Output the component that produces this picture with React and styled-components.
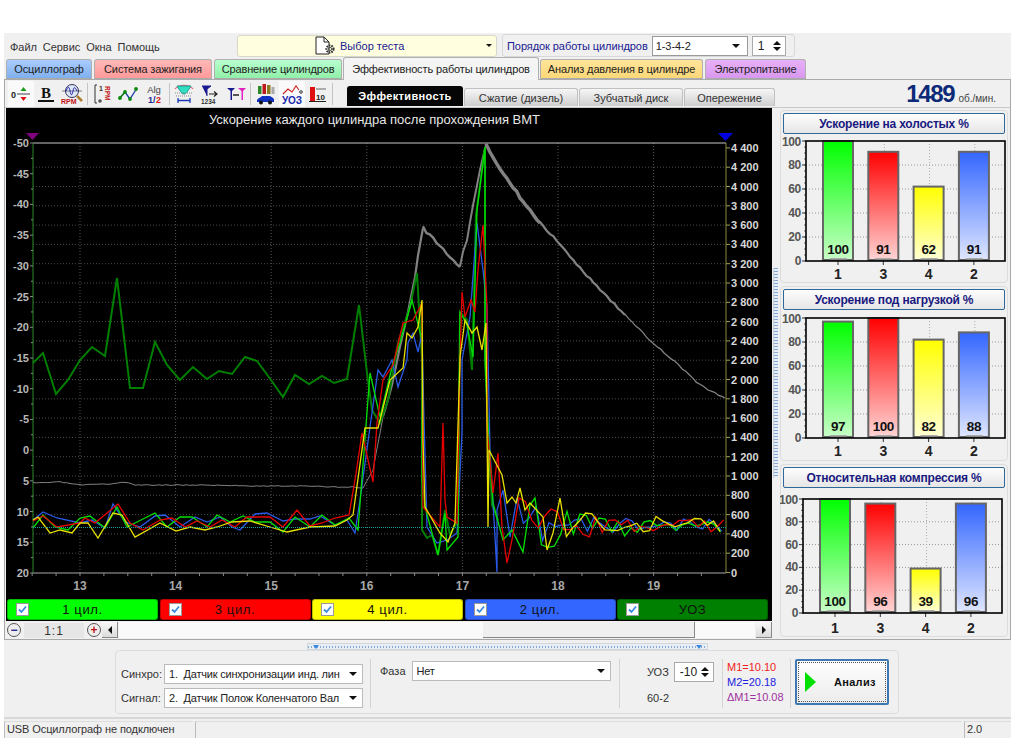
import React from "react";
import styled, { createGlobalStyle } from "styled-components";

const UI = `"Liberation Sans", Arial, sans-serif`;

const Global = createGlobalStyle`
  html, body { margin: 0; padding: 0; background: #fff; }
  body { font-family: ${UI}; font-size: 11px; color: #222; }
`;

const Win = styled.div`
  width: 1007px; height: 705px; margin: 33px 0 0 4px; background: #f0f0f0;
  display: flex; flex-direction: column; overflow: hidden;
`;
const TopRow = styled.div`
  height: 25px; display: flex; align-items: center; padding: 0 0 0 6px; box-sizing: border-box;
`;
const Menu = styled.div`display: flex; gap: 6px; width: 227px; padding-top: 3px; color: #333; letter-spacing: -.05px;`;
const TestSelect = styled.div`
  width: 260px; height: 22px; box-sizing: border-box; background: #ffffe0; border: 1px solid #d8d8c8; border-radius: 3px;
  display: flex; align-items: center; color: #1a1a90; padding: 0 4px 0 77px; gap: 3px;
`;
const Caret = styled.span`
  width: 0; height: 0; border-left: ${p => p.$s || 3}px solid transparent; border-right: ${p => p.$s || 3}px solid transparent;
  border-top: ${p => p.$s || 3}px solid #111; margin-left: auto; flex: none;
`;
const OrderGroup = styled.div`
  margin-left: 5px; width: 293px; height: 23px; box-sizing: border-box; border: 1px solid #d8d8d8; border-radius: 3px;
  display: flex; align-items: center; padding: 0 0 0 4px; color: #1a1a90; gap: 4px; letter-spacing: -.07px;
`;
const SmallSelect = styled.div`
  width: 96px; height: 20px; box-sizing: border-box; background: #fff; border: 1px solid #999; display: flex; align-items: center;
  padding: 0 7px 0 3px; color: #222;
`;
const Spin = styled.div`
  width: ${p => p.$w}px; height: 20px; box-sizing: border-box; background: #fff; border: 1px solid #aaa; display: flex; align-items: center;
  justify-content: space-between; padding: 0 4px 0 5px; color: #222; font-size: 12px; flex: none;
`;
const Arrows = styled.span`
  display: flex; flex-direction: column; gap: 2px;
  &::before, &::after { content: ""; width: 0; height: 0; border-left: 4px solid transparent; border-right: 4px solid transparent; }
  &::before { border-bottom: 4px solid #111; }
  &::after { border-top: 4px solid #111; }
`;

const TabRow = styled.div`height: 21px; display: flex; align-items: flex-end; padding-left: 2px; gap: 2px; position: relative;`;
const Tab = styled.div`
  width: ${p => p.$w}px; height: ${p => p.$active ? 23 : 20}px; box-sizing: border-box; flex: none;
  display: flex; align-items: center; justify-content: center; color: #222; letter-spacing: -.13px;
  background: ${p => p.$active ? "#f4f4f4" : `linear-gradient(${p.$c1}, ${p.$c2})`};
  border: 1px solid #b0b0b0; border-bottom: ${p => p.$active ? "none" : "1px solid #aaa"};
  border-radius: 3px 3px 0 0; position: relative; z-index: ${p => p.$active ? 2 : 1};
  margin-bottom: ${p => p.$active ? -1 : 0}px; margin-left: ${p => p.$ml || 0}px;
`;
const Pane = styled.div`
  height: 561px; box-sizing: border-box; border: 1px solid #a8a8a8; border-top: 1px solid #aaa; display: flex; flex-direction: column;
  padding: 0 0 0 1px;
`;
const ToolRow = styled.div`
  height: 27px; display: flex; align-items: flex-end; flex: none; border-bottom: 1px solid #c8c8c8; margin-left: -1px;
`;
const Tools = styled.div`display: flex; align-items: center; height: 26px; width: 342px; flex: none; padding-left: 3px; box-sizing: border-box;`;
const Tool = styled.div`
  width: 25.6px; height: 26px; flex: none; display: flex; align-items: center; justify-content: center;
  background: ${p => p.$on ? "#fafafa" : "transparent"};
`;
const Sep = styled.div`width: 1px; height: 22px; background: #c4c4c4; margin: 0 2px; flex: none;`;
const SubTabs = styled.div`display: flex; align-items: flex-end; gap: 1px; margin-bottom: 1px;`;
const SubTab = styled.div`
  width: ${p => p.$w}px; height: ${p => p.$active ? 20 : 18}px; box-sizing: border-box; display: flex; align-items: center; justify-content: center;
  border-radius: 3px 3px 0 0; font-size: 11px;
  ${p => p.$active
    ? "background:#050505;color:#fff;font-weight:bold;letter-spacing:.35px;"
    : "background:linear-gradient(#f6f6f6,#cfcfcf);color:#333;border:1px solid #c0c0c0;border-bottom:none;"}
`;
const Rpm = styled.div`
  margin-left: auto; padding-right: 14px; display: flex; align-items: baseline; gap: 4px; color: #444; font-size: 10px; align-self: center;
  b { font-size: 24px; color: #0c2a78; letter-spacing: -1.3px; }
`;
const Main = styled.div`display: flex; flex: 1; min-height: 0;`;
const LeftCol = styled.div`width: 766px; flex: none; display: flex; flex-direction: column;`;
const ChartBox = styled.div`background: #000; height: 513px; flex: none; display: flex; flex-direction: column;`;
const ChartSvg = styled.svg`display: block; flex: none;`;
const Legend = styled.div`display: flex; gap: 1.5px; padding: 0 4px 0 1px; height: 22px;`;
const LegendBtn = styled.div`
  flex: 1; height: 21px; box-sizing: border-box; background: ${p => p.$c}; border-radius: 3px; border: 1px solid rgba(0,0,0,.25);
  display: flex; align-items: center; position: relative; justify-content: center; color: #111; font-size: 13px; letter-spacing: .6px;
`;
const Check = styled.span`
  position: absolute; left: 8px; top: 3px; width: 13px; height: 13px; background: #fff; border: 1px solid #999; box-sizing: border-box;
  display: flex; align-items: center; justify-content: center;
`;
const ScrollRow = styled.div`display: flex; align-items: center; height: 16px; margin-top: 1px; gap: 1px;`;
const Round = styled.div`
  width: 14px; height: 14px; border-radius: 50%; box-sizing: border-box; border: 1px solid #555; background: #eee; display: flex; align-items: center; justify-content: center; flex: none;
  margin-left: ${p => p.$ml || 0}px; color: ${p => p.$c}; font-weight: bold; font-size: 12px; line-height: 1;
`;
const Ratio = styled.div`
  width: 60px; height: 15px; background: #e6e6e6; margin: 0 2px; text-align: center; line-height: 16px; font-size: 12px; letter-spacing: 1px; color: #333; flex: none;
`;
const ScrollBtn = styled.div`
  width: 16px; height: 16px; background: linear-gradient(#f8f8f8,#dcdcdc); border-right: 1px solid #888; border-bottom: 1px solid #888; box-sizing: border-box; display: flex; align-items: center; justify-content: center; flex: none;
`;
const Tri = styled.span`
  width: 0; height: 0; border-top: 4px solid transparent; border-bottom: 4px solid transparent;
  ${p => p.$dir === "l" ? "border-right: 4px solid #111;" : "border-left: 4px solid #111;"}
`;
const Track = styled.div`flex: 1; height: 16px; display: flex; background: #fafafa;`;
const Space = styled.div`width: ${p => p.$w}px; flex: none;`;
const Thumb = styled.div`width: 212px; height: 16px; background: #efefef; box-sizing: border-box; border-right: 1px solid #888; border-bottom: 1px solid #888; flex: none;`;

const VSplit = styled.div`
  width: 4px; height: 210px; align-self: flex-start; margin: 160px 2px 0 1px; flex: none; background-color: #e8eef4; border-left: 1px solid #c8d0d8;
  background-image: repeating-linear-gradient(#7fa8d8 0 1px, transparent 1px 3px);
`;
const RightCol = styled.div`width: 228px; flex: none; display: flex; flex-direction: column; gap: 3px; padding-top: 2px;`;
const Card = styled.div`
  height: ${p => p.$h}px; box-sizing: border-box; border: 1px solid #dcdcdc; border-radius: 4px; padding: 2px 2px 0; flex: none;
`;
const CardTitle = styled.div`
  height: 21px; box-sizing: border-box; border: 1px solid #2f6799; border-radius: 2px; background: linear-gradient(#fdfdfd,#e6e6e6);
  display: flex; align-items: center; justify-content: center; color: #1a1a80; font-weight: bold; font-size: 12px; letter-spacing: -.2px;
`;
const CardSvg = styled.svg`display: block; margin-left: -3px;`;

const HSplit = styled.div`
  width: 401px; height: 7px; margin: 3px 0 0 303px; flex: none; background-color: #e8eef4; border: 1px solid #cfd6dc; box-sizing: border-box; position: relative;
  background-image: repeating-linear-gradient(90deg, #7fa8d8 0 1px, transparent 1px 3px); background-size: 100% 2px; background-repeat: no-repeat; background-position: 0 2px;
  &::before, &::after {
    content: ""; position: absolute; top: 1px; width: 0; height: 0;
    border-left: 3px solid transparent; border-right: 3px solid transparent; border-top: 4px solid #3a8ae0;
  }
  &::before { left: 5px; }
  &::after { right: 5px; }
`;
const Bottom = styled.div`
  width: 784px; height: 64px; margin-left: 111px; flex: none; box-sizing: border-box; border: 1px solid #dcdcdc; border-radius: 4px;
  display: flex; align-items: stretch; padding: 8px 0 0 5px;
`;
const FieldGrid = styled.div`display: grid; grid-template-columns: 42px 199px; column-gap: 1px; row-gap: 4px; align-items: center; align-content: start; padding-top: 5px;`;
const Label = styled.span`color: #333; font-size: 11px;`;
const PhaseLabel = styled(Label)`padding-top: 4px;`;
const Combo = styled.div`
  width: ${p => p.$w}px; height: 20px; box-sizing: border-box; background: #fff; border: 1px solid #bbb; display: flex; align-items: center;
  padding: 0 5px 0 4px; color: #222; font-size: 11px; white-space: nowrap; flex: none; gap: 3px;
`;
const ComboText = styled.span`flex: 1; overflow: hidden; min-width: 0; letter-spacing: -.2px;`;
const Divider = styled.div`width: 1px; height: 49px; background: #d4d4d4; flex: none; margin: ${p => p.$m};`;
const PhaseBox = styled.div`display: flex; align-items: flex-start; gap: 6px; padding-top: 2px; width: 233px; flex: none;`;
const UozBox = styled.div`width: 68px; flex: none; padding: 3px 0 0 27px; display: flex; flex-direction: column; gap: 10px; color: #333;`;
const UozRow = styled.div`display: flex; align-items: center; gap: 5px; white-space: nowrap;`;
const Meas = styled.div`width: 63px; flex: none; display: flex; flex-direction: column; gap: 2px; font-size: 11px; margin-top: 2px;`;
const MeasLine = styled.span`color: ${p => p.$c}; line-height: 13px; white-space: nowrap;`;
const RunBtn = styled.div`
  width: 94px; height: 46px; box-sizing: border-box; border: 2px solid #3f78b0; border-radius: 2px; outline: 1px dotted #555; outline-offset: -4px;
  background: linear-gradient(#fff,#ececec); display: flex; align-items: center; padding-left: 8px; gap: 18px; font-weight: bold; color: #111; font-size: 11px; letter-spacing: .3px;
  flex: none;
`;
const Status = styled.div`
  margin-top: 3px; border-top: 2px solid #d8d8d8; height: 21px; box-sizing: border-box; display: flex; gap: 2px; padding-top: 2px; flex: none;
`;
const StatusCell = styled.div`
  width: ${p => p.$w ? p.$w + "px" : "auto"}; flex: ${p => p.$w ? "none" : 1}; border-left: 1px solid #bbb; border-top: 1px solid #ddd;
  padding: 1px 0 0 2px; font-size: 11px; color: #333; white-space: nowrap; letter-spacing: -.1px;
`;

/* ---------- chart data ---------- */
const prng = (seed) => { let s = seed; return () => { s = (s * 16807) % 2147483647; return s / 2147483647; }; };
const tail = (seed, start) => {
  const r = prng(seed); const pts = [];
  for (let x = start; x <= 726; x += 6.4) {
    const amp = 6 + 22 * Math.exp(-(x - start) / 55);
    pts.push([x, 526 + (r() - .5) * 2 * amp]);
  }
  return pts;
};
const jag = (seed, pts, amp = 1.4) => {
  const r = prng(seed); const out = [];
  for (let i = 0; i < pts.length - 1; i++) {
    const [x0, y0] = pts[i]; const [x1, y1] = pts[i + 1];
    const n = Math.max(1, Math.round((x1 - x0) / 3.5));
    for (let k = 0; k < n; k++) {
      const t = k / n;
      out.push([x0 + (x1 - x0) * t, y0 + (y1 - y0) * t + (r() - .5) * 2 * amp]);
    }
  }
  out.push(pts[pts.length - 1]);
  return out;
};
const toD = (pts) => pts.map(([x, y]) => `${x.toFixed(1)},${y.toFixed(1)}`).join(" ");

const uoz = [[33,363],[43,353],[56,394],[68,380],[80,360],[92,347],[105,356],[117,278],[130,388],[143,388],[155,342],[167,365],[180,380],[193,367],[207,379],[219,371],[232,374],[245,357],[257,361],[271,380],[283,397],[295,375],[309,384],[322,376],[334,383],[347,379],[359,305],[367,373],[372,410],[380,423],[388,400],[398,343],[410,307],[417,273],[422,360],[422,530],[427,538],[432,535],[438,555],[445,510],[450,535],[458,520],[460,312],[467,320],[472,370],[476,215],[485,147],[485,357],[488,430],[492,505],[498,520]];
const grayFlat = [[33,483],[60,482],[80,485],[110,484],[125,482],[135,485],[200,485],[260,486],[300,486],[335,487],[352,487],[363,488],[373,470],[383,417]];
const grayRise = [[383,417],[392,385],[400,347],[408,312],[415,277],[418,255],[423,228]];
const grayDip = [[423,228],[460,267]];
const grayClimb = [[460,267],[463,252],[467,240],[473,205],[480,170],[486,145]];
const grayFall1 = [[486,145],[500,168],[520,197],[540,223]];
const grayFall2 = [[540,223],[560,244],[580,268],[600,290],[625,315]];
const grayFall3 = [[625,315],[650,340],[675,362],[700,385],[712,392],[725,398]];
const blue = [[33,520],[43,512],[57,518],[80,523],[92,520],[105,528],[113,504],[125,522],[140,527],[155,516],[165,515],[180,527],[195,517],[207,522],[220,517],[232,527],[240,530],[255,514],[267,513],[283,521],[295,519],[310,519],[320,516],[335,525],[347,520],[355,533],[360,500],[370,427],[378,370],[383,377],[392,360],[398,387],[407,360],[408,343],[413,333],[418,352],[422,333],[424,420],[427,527],[437,543],[447,540],[457,533],[462,433],[462,360],[470,317],[477,223],[483,270],[487,307],[490,450],[497,572],[497,510],[503,490],[510,537],...tail(11, 517)];
const red = [[33,521],[43,516],[57,527],[80,523],[85,518],[95,523],[118,504],[130,523],[143,530],[160,520],[172,518],[185,527],[197,521],[210,527],[222,520],[235,527],[247,517],[270,517],[283,527],[297,510],[310,526],[322,523],[335,518],[349,515],[355,480],[362,433],[373,482],[377,423],[383,380],[393,365],[403,323],[413,320],[420,307],[422,303],[423,507],[440,527],[443,423],[445,500],[447,517],[457,523],[460,360],[462,292],[465,317],[471,300],[475,312],[478,270],[483,225],[487,307],[487,427],[493,493],[498,453],[502,527],[507,563],[512,540],...tail(23, 519)];
const lime = [[33,528],[43,515],[55,527],[68,530],[80,518],[90,516],[105,528],[117,507],[127,527],[155,513],[167,527],[180,517],[192,517],[207,527],[217,515],[230,522],[243,516],[255,522],[270,522],[283,532],[295,517],[310,527],[322,515],[335,525],[349,518],[358,530],[370,373],[380,417],[393,363],[400,343],[412,300],[422,340],[422,480],[425,507],[438,555],[445,513],[447,550],[458,537],[460,312],[467,325],[473,357],[477,210],[485,147],[485,357],[488,427],[493,503],[503,540],[512,530],[523,552],[530,505],...tail(37, 535)];
const yellow = [[33,520],[38,517],[50,533],[60,530],[72,533],[80,523],[88,523],[98,538],[113,513],[122,515],[135,537],[160,523],[176,531],[190,527],[205,530],[217,527],[232,522],[250,521],[270,527],[287,532],[310,527],[335,526],[347,520],[353,515],[365,428],[378,428],[390,380],[403,368],[407,333],[412,338],[418,327],[422,300],[423,440],[425,507],[440,533],[448,542],[455,523],[460,360],[460,357],[465,320],[472,333],[477,327],[482,350],[486,323],[488,527],[489,450],[502,475],[507,503],[512,497],[516,503],[520,488],[525,510],[530,503],[543,517],[547,550],[553,533],...tail(51, 560)];

const yTop = 143, yBot = 573, xL = 33, xR = 726;
const leftVals = [-50,-45,-40,-35,-30,-25,-20,-15,-10,-5,0,5,10,15,20];
const leftY = (v) => yBot - (20 - v) * (430 / 70);
const rightVals = Array.from({ length: 23 }, (_, i) => i * 200);
const rightY = (v) => 572.5 - v / 200 * 19.3;
const xVals = [13,14,15,16,17,18,19];
const xAt = (v) => 80 + (v - 13) * 95.6;
const fmt = (n) => n >= 1000 ? `${Math.floor(n / 1000)} ${String(n % 1000).padStart(3, "0")}` : String(n);

const GrayLine = ({ seed, pts, w, amp }) => (
  <polyline points={toD(jag(seed, pts, amp))} fill="none" stroke="#828282" strokeWidth={w} />
);

const MainChart = () => (
  <ChartSvg width="766" height="491" viewBox="6 108 766 491">
    <text x="374.500" y="124" fill="#e8e8e8" fontSize="13" textAnchor="middle" fontFamily={UI}>Ускорение каждого цилиндра после прохождения ВМТ</text>
    <path d="M26 133h13l-6.500 7z" fill="#800080" />
    <path d="M718 133h15l-7.500 8z" fill="#0000e0" />
    {rightVals.slice(1, 22).map(v => (
      <line key={v} x1={xL} x2={xR} y1={rightY(v)} y2={rightY(v)} stroke="#4a4a4a" strokeDasharray="1 2" />
    ))}
    {xVals.map(v => <line key={v} x1={xAt(v)} x2={xAt(v)} y1={yTop} y2={yBot} stroke="#555" strokeDasharray="1 2" />)}
    <line x1={xL} x2={xR} y1={yTop} y2={yTop} stroke="#c8c8c8" />
    <line x1={xL} x2={xR} y1={yBot} y2={yBot} stroke="#aaa" />
    <line x1={xL} x2={xL} y1={yTop} y2={yBot} stroke="#2a8a2a" />
    <line x1={xR} x2={xR} y1={yTop} y2={yBot} stroke="#8a8a3a" />
    {Array.from({ length: 29 }, (_, i) => i).map(i => (
      <line key={i} x1={xL - (i % 2 === 0 ? 3 : 2)} x2={xL} y1={leftY(-50 + i * 2.5)} y2={leftY(-50 + i * 2.5)} stroke="#888" />
    ))}
    {leftVals.map(v => <text key={v} x={29} y={leftY(v) + 4} fill="#b8b8b8" fontSize="11" textAnchor="end" fontFamily={UI} fontWeight="bold">{v}</text>)}
    {rightVals.map(v => (
      <g key={v}>
        <line x1={xR} x2={xR + 4} y1={rightY(v)} y2={rightY(v)} stroke="#a0a050" />
        <text x={731} y={rightY(v) + 4} fill="#d8d8d8" fontSize="11" fontFamily={UI} fontWeight="bold">{fmt(v)}</text>
      </g>
    ))}
    {Array.from({ length: 29 }, (_, i) => i).map(i => {
      const x = xAt(12.5) + i * 23.9;
      return x <= xR ? <line key={i} x1={x} x2={x} y1={yBot} y2={yBot + 3} stroke="#888" /> : null;
    })}
    {xVals.map(v => <text key={v} x={xAt(v)} y={590} fill="#a8a8a8" fontSize="12" textAnchor="middle" fontFamily={UI} fontWeight="bold">{v}</text>)}
    <GrayLine seed={3} pts={grayFlat} w={1} amp={0.4} />
    <GrayLine seed={5} pts={grayRise} w={2.2} amp={0.6} />
    <GrayLine seed={7} pts={grayDip} w={2.4} amp={1.8} />
    <GrayLine seed={9} pts={grayClimb} w={2} amp={0.5} />
    <GrayLine seed={13} pts={grayFall1} w={3.4} amp={1.2} />
    <GrayLine seed={17} pts={grayFall2} w={2.2} amp={1} />
    <GrayLine seed={19} pts={grayFall3} w={1.3} amp={0.8} />
    <polyline points={toD(uoz)} fill="none" stroke="#007f00" strokeWidth="2" />
    <polyline points={toD(blue)} fill="none" stroke="#2a5ae8" strokeWidth="1.300" />
    <polyline points={toD(lime)} fill="none" stroke="#00e000" strokeWidth="1.300" />
    <polyline points={toD(red)} fill="none" stroke="#e80000" strokeWidth="1.300" />
    <polyline points={toD(yellow)} fill="none" stroke="#e8e000" strokeWidth="1.300" />
    <line x1={xL} x2={xR} y1="527.500" y2="527.500" stroke="#1c9c9c" strokeDasharray="1 1" />
  </ChartSvg>
);

const BAR_COLORS = {
  "1": ["#00ff00", "#c8ffc8"],
  "3": ["#ff0000", "#ffd4d4"],
  "4": ["#ffff00", "#ffffd4"],
  "2": ["#3366ff", "#dfe6ff"],
};
const BarChart = ({ id, values, top, plotH, h, left, right, labelDy = 18 }) => {
  const base = top + plotH;
  const ticks = [0, 20, 40, 60, 80, 100];
  const bars = ["1", "3", "4", "2"];
  const sx = (i) => left + 17 + i * 45.3;
  return (
    <CardSvg width="226" height={h} viewBox={`0 0 226 ${h}`}>
      <defs>
        {bars.map(b => (
          <linearGradient key={b} id={`${id}-${b}`} x1="0" y1="0" x2="0" y2="1">
            <stop offset="0" stopColor={BAR_COLORS[b][0]} />
            <stop offset="1" stopColor={BAR_COLORS[b][1]} />
          </linearGradient>
        ))}
      </defs>
      {ticks.slice(1, 5).map(t => {
        const y = base - t * plotH / 100;
        return <line key={t} x1={left} x2={right} y1={y} y2={y} stroke="#999" strokeDasharray="1 2" />;
      })}
      {[0, 1, 2, 3].map(i => <line key={i} x1={left + 33 + i * 45.3} x2={left + 33 + i * 45.3} y1={top} y2={base} stroke="#aaa" strokeDasharray="1 2" />)}
      {ticks.map(t => {
        const y = base - t * plotH / 100;
        return (
          <g key={t}>
            <line x1={left - 4} x2={left} y1={y} y2={y} stroke="#333" />
            <text x={left - 5} y={y + (t === 100 ? 5 : 4)} fontSize="12" fontWeight="bold" fill="#555" textAnchor="end" fontFamily={UI} letterSpacing="-.3">{t}</text>
          </g>
        );
      })}
      {Array.from({ length: 21 }, (_, i) => i).map(i => (
        <line key={i} x1={left - 2} x2={left} y1={base - i * plotH / 20} y2={base - i * plotH / 20} stroke="#666" />
      ))}
      {bars.map((b, i) => {
        const v = values[i];
        const y = base - v * plotH / 100;
        return (
          <g key={b}>
            <rect x={sx(i)} y={y} width="30" height={base - y - 1} fill={`url(#${id}-${b})`} stroke="#666" strokeWidth="2" />
            <rect x={sx(i) + 7} y={base - 3} width="17" height="1.500" fill="#aaa" />
            <text x={sx(i) + 15} y={base - 7} fontSize="13.500" fontWeight="bold" fill="#111" textAnchor="middle" fontFamily={UI} letterSpacing="-.4">{v}</text>
            <line x1={sx(i) + 15} x2={sx(i) + 15} y1={base} y2={base + 4} stroke="#333" />
            <text x={sx(i) + 15} y={base + labelDy} fontSize="14" fontWeight="bold" fill="#222" textAnchor="middle" fontFamily={UI}>{b}</text>
          </g>
        );
      })}
      <rect x={left} y={top} width={right - left} height={plotH} fill="none" stroke="#000" strokeWidth="1.600" />
    </CardSvg>
  );
};

/* ---------- toolbar icons ---------- */
const ic = { width: 22, height: 22, viewBox: "0 0 22 22" };
const IFont = { fontFamily: UI, fontWeight: "bold" };
const IconZero = () => (
  <svg {...ic}><text x="1" y="15" fontSize="9" fill="#222" {...IFont}>0</text>
    <path d="M7 11h13" stroke="#444" /><path d="M13.500 4l3 4h-6z" fill="#1a9a1a" /><path d="M13.500 18l3-4h-6z" fill="#e01010" /></svg>
);
const IconBold = () => (
  <svg {...ic}><text x="11" y="15" fontSize="15" fill="#111" textAnchor="middle" fontFamily="'Liberation Serif', serif" fontWeight="bold">B</text><path d="M3 18h16" stroke="#111" strokeWidth="2" /></svg>
);
const IconRpm = () => (
  <svg {...ic} width="24" viewBox="0 0 24 22"><circle cx="12" cy="8" r="6.500" fill="#dfe8f8" stroke="#335" />
    <path d="M6 8c2-5 3-5 4 0s2 5 3 0 2-4 4 0" fill="none" stroke="#22a" /><path d="M2 8h20" stroke="#335" strokeWidth=".6" />
    <path d="M17 13l5 5" stroke="#b08030" strokeWidth="2.500" /><text x="1" y="21" fontSize="7" fill="#c01010" {...IFont}>RPM</text></svg>
);
const IconRuler = () => (
  <svg {...ic}><path d="M5 2H3v18h2" fill="none" stroke="#333" /><circle cx="8" cy="18" r="1.800" fill="#555" />
    <text x="7" y="8" fontSize="7" fill="#333" {...IFont}>1</text>
    <text x="0" y="0" fontSize="6.500" fill="#c01010" transform="translate(13,3) rotate(90)" {...IFont}>RPM</text></svg>
);
const IconZig = () => (
  <svg {...ic}><path d="M2 16l6-7 5 7 7-11" fill="none" stroke="#1a3ab0" strokeWidth="1.300" />
    <path d="M2 16l6-7" stroke="#1a8a1a" strokeWidth="1.500" /><g fill="#0a8a0a"><circle cx="3" cy="15" r="1.900" /><circle cx="8" cy="9" r="1.900" /><circle cx="13" cy="16" r="1.900" /><circle cx="19" cy="6" r="1.900" /></g></svg>
);
const IconAlg = () => (
  <svg {...ic}><text x="11" y="10" fontSize="9.500" fill="#444" textAnchor="middle" fontFamily={UI}>Alg</text>
    <text x="5" y="20" fontSize="9" fill="#1a2a90" {...IFont}>1/</text><text x="13" y="20" fontSize="9" fill="#d01818" {...IFont}>2</text></svg>
);
const IconBridge = () => (
  <svg {...ic}><path d="M2 6c4-5 14-5 18 0" fill="none" stroke="#e06060" strokeWidth="1.200" /><path d="M4 3c3 4 4 8 7 8s4-4 7-8z" fill="#30e0c0" stroke="#1a9a9a" />
    <path d="M2 10h18M3 13h16" stroke="#888" strokeDasharray="1 1" /><path d="M5 15v5M17 15v5M5 17.500h12" stroke="#1a3ab0" strokeWidth="1.300" /></svg>
);
const IconTArrow = () => (
  <svg {...ic}><path d="M3 3h9l-4 3v7" fill="#1a1a90" stroke="#1a1a90" /><path d="M10 11h8m-3-2.500l3 2.500-3 2.500" fill="none" stroke="#222" strokeWidth="1.200" />
    <text x="2" y="21" fontSize="6.500" fill="#333" {...IFont}>1234</text></svg>
);
const IconTT = () => (
  <svg {...ic}><path d="M2 5h8l-3 3v9h-1.500v-9z" fill="#1a1a90" /><path d="M13 5h8l-3 3v9h-1.500v-9z" fill="#e020c0" /><path d="M8 12h6" stroke="#222" strokeWidth="1.500" /></svg>
);
const IconCar = () => (
  <svg {...ic}><rect x="3" y="3" width="3.500" height="8" fill="#2a8a2a" /><rect x="7.500" y="1" width="3.500" height="10" fill="#c01818" /><rect x="12" y="2" width="3.500" height="9" fill="#8a7a20" /><rect x="16.500" y="4" width="3" height="7" fill="#aaa" />
    <path d="M2 17c1-2 3-2 5-4h7c2 0 4 2 5 3v3H2z" fill="#1030c0" /><circle cx="6" cy="19.500" r="2" fill="#111" /><circle cx="15" cy="19.500" r="2" fill="#111" /></svg>
);
const IconYoz = () => (
  <svg {...ic}><path d="M2 11l5-5 4 3 4-6 3 4" fill="none" stroke="#d02020" strokeWidth="1.100" /><circle cx="20" cy="9" r="1.300" fill="none" stroke="#333" />
    <text x="1" y="21" fontSize="10" fill="#1a2ab0" {...IFont}>УОЗ</text></svg>
);
const IconTen = () => (
  <svg {...ic}><rect x="4" y="4" width="5" height="14" fill="#e01010" /><path d="M3 18.500h17" stroke="#222" /><path d="M10 6h10" stroke="#666" /><text x="10" y="17" fontSize="8" fill="#222" {...IFont}>10</text></svg>
);
const FileGear = () => (
  <svg width="22" height="20" viewBox="0 0 22 20">
    <path d="M1 1h8l5 5v12H1z" fill="#fff" stroke="#222" /><path d="M9 1v5h5" fill="none" stroke="#222" />
    <circle cx="15" cy="13" r="3.500" fill="none" stroke="#333" strokeWidth="2.200" strokeDasharray="1.500 1" /><circle cx="15" cy="13" r="1.600" fill="none" stroke="#555" />
  </svg>
);
const CheckMark = () => (
  <svg width="9" height="9" viewBox="0 0 9 9"><path d="M1 4.500l2.500 2.500L8 1.500" fill="none" stroke="#3a8ae0" strokeWidth="1.800" /></svg>
);

const tabs = [
  { t: "Осциллограф", w: 86, c1: "#aaccff", c2: "#7fb0ee" },
  { t: "Система зажигания", w: 118, c1: "#ffb8b8", c2: "#ff9a9a" },
  { t: "Сравнение цилиндров", w: 128, c1: "#b8ffd0", c2: "#90f0a8" },
  { t: "Эффективность работы цилиндров", w: 196, active: true, ml: -1 },
  { t: "Анализ давления в цилиндре", w: 163, c1: "#ffe49a", c2: "#fbd878", ml: -1 },
  { t: "Электропитание", w: 101, c1: "#e8b0f8", c2: "#d898f0" },
];
const legend = [["1 цил.", "#00ff00"], ["3 цил.", "#ff0000"], ["4 цил.", "#ffff00"], ["2 цил.", "#3366ff"], ["УОЗ", "#008000"]];

export default function App() {
  return (
    <>
      <Global />
      <Win>
        <TopRow>
          <Menu><span>Файл</span><span>Сервис</span><span>Окна</span><span>Помощь</span></Menu>
          <TestSelect><FileGear /><span>Выбор теста</span><Caret /></TestSelect>
          <OrderGroup>
            <span>Порядок работы цилиндров</span>
            <SmallSelect>1-3-4-2<Caret $s={4} /></SmallSelect>
            <Spin $w={34}>1<Arrows /></Spin>
          </OrderGroup>
        </TopRow>
        <TabRow>
          {tabs.map(t => <Tab key={t.t} $w={t.w} $c1={t.c1} $c2={t.c2} $active={t.active} $ml={t.ml}>{t.t}</Tab>)}
        </TabRow>
        <Pane>
          <ToolRow>
            <Tools>
              <Tool $on><IconZero /></Tool><Tool><IconBold /></Tool><Tool><IconRpm /></Tool><Sep />
              <Tool><IconRuler /></Tool><Tool><IconZig /></Tool><Tool><IconAlg /></Tool><Sep />
              <Tool><IconBridge /></Tool><Tool><IconTArrow /></Tool><Tool><IconTT /></Tool><Sep />
              <Tool><IconCar /></Tool><Tool $on><IconYoz /></Tool><Tool><IconTen /></Tool><Sep />
            </Tools>
            <SubTabs>
              <SubTab $active $w={116}>Эффективность</SubTab>
              <SubTab $w={114}>Сжатие (дизель)</SubTab>
              <SubTab $w={104}>Зубчатый диск</SubTab>
              <SubTab $w={91}>Опережение</SubTab>
            </SubTabs>
            <Rpm><b>1489</b> об./мин.</Rpm>
          </ToolRow>
          <Main>
            <LeftCol>
              <ChartBox>
                <MainChart />
                <Legend>
                  {legend.map(([t, c]) => <LegendBtn key={t} $c={c}><Check><CheckMark /></Check>{t}</LegendBtn>)}
                </Legend>
              </ChartBox>
              <ScrollRow>
                <Round $ml={1} $c="#1a1a90">−</Round>
                <Ratio>1:1</Ratio>
                <Round $c="#c01010">+</Round>
                <ScrollBtn><Tri $dir="l" /></ScrollBtn>
                <Track><Space $w={364} /><Thumb /></Track>
                <ScrollBtn><Tri $dir="r" /></ScrollBtn>
              </ScrollRow>
            </LeftCol>
            <VSplit />
            <RightCol>
              <Card $h={173}>
                <CardTitle>Ускорение на холостых %</CardTitle>
                <BarChart id="a" values={[100, 91, 62, 91]} top={7} plotH={120} h={148} left={26} right={225} />
              </Card>
              <Card $h={175}>
                <CardTitle>Ускорение под нагрузкой %</CardTitle>
                <BarChart id="b" values={[97, 100, 82, 88]} top={8} plotH={120} h={150} left={26} right={225} />
              </Card>
              <Card $h={173}>
                <CardTitle>Относительная компрессия %</CardTitle>
                <BarChart id="c" values={[100, 96, 39, 96]} top={11} plotH={114} h={148} left={23} right={222} labelDy={20} />
              </Card>
            </RightCol>
          </Main>
        </Pane>
        <HSplit />
        <Bottom>
          <FieldGrid>
            <Label>Синхро:</Label>
            <Combo $w={199}><ComboText>1.&nbsp; Датчик синхронизации инд. лин</ComboText><Caret $s={4} /></Combo>
            <Label>Сигнал:</Label>
            <Combo $w={199}><ComboText>2.&nbsp; Датчик Полож Коленчатого Вал</ComboText><Caret $s={4} /></Combo>
          </FieldGrid>
          <Divider $m="0 9px 0 7px" />
          <PhaseBox>
            <PhaseLabel>Фаза</PhaseLabel>
            <Combo $w={199}><ComboText>Нет</ComboText><Caret $s={4} /></Combo>
          </PhaseBox>
          <Divider $m="0 0 0 6px" />
          <UozBox>
            <UozRow>УОЗ<Spin $w={40}>-10<Arrows /></Spin></UozRow>
            <span>60-2</span>
          </UozBox>
          <Divider $m="0 4px 0 7px" />
          <Meas>
            <MeasLine $c="#f02020">M1=10.10</MeasLine>
            <MeasLine $c="#2020e0">M2=20.18</MeasLine>
            <MeasLine $c="#a030a0">ΔM1=10.08</MeasLine>
          </Meas>
          <Divider $m="0 4px 0 0" />
          <RunBtn>
            <svg width="11" height="20" viewBox="0 0 11 20"><path d="M0 0l11 10L0 20z" fill="#00e000" /></svg>
            Анализ
          </RunBtn>
        </Bottom>
        <Status>
          <StatusCell $w={186}>USB Осциллограф не подключен</StatusCell>
          <StatusCell />
          <StatusCell $w={44}>2.0</StatusCell>
        </Status>
      </Win>
    </>
  );
}
